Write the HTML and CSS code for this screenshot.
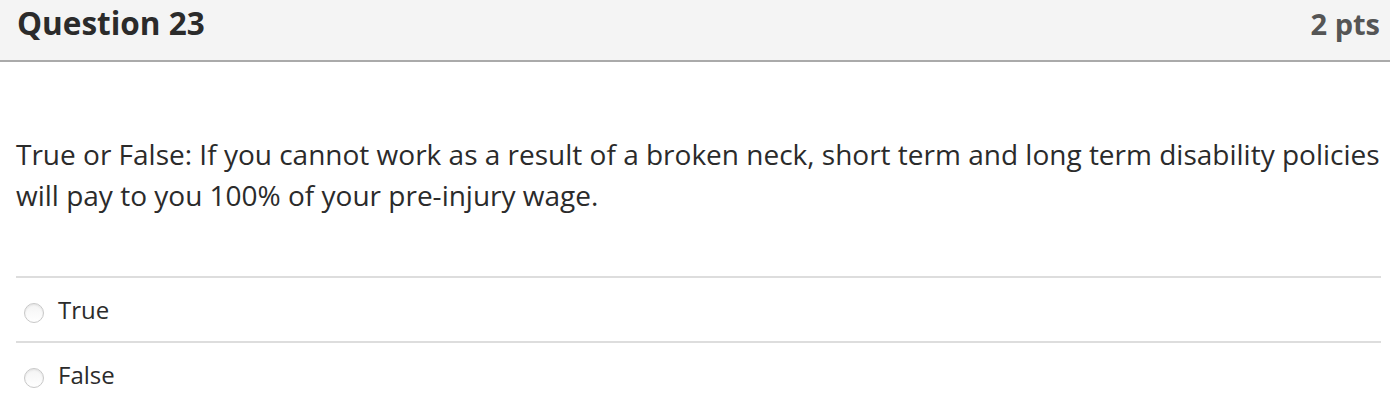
FILE: index.html
```html
<!DOCTYPE html>
<html>
<head>
<meta charset="utf-8">
<link rel="stylesheet" href="styles.css">
</head>
<body>
<div class="question">
  <div class="header">
    <span class="title">Question 23</span>
    <span class="pts">2 pts</span>
  </div>
  <div class="content">
    <p class="text">True or False: If you cannot work as a result of a broken neck, short term and long term disability policies will pay to you 100% of your pre-injury wage.</p>
    <div class="answers">
      <div class="answer"><span class="radio"></span><span class="label">True</span></div>
      <div class="answer"><span class="radio"></span><span class="label">False</span></div>
    </div>
  </div>
</div>
</body>
</html>
```
FILE: styles.css
```css
html, body {
  margin: 0;
  padding: 0;
  background: #fff;
}
body {
  font-family: "Open Sans", "Noto Sans", sans-serif;
  color: #2d3b45;
  width: 1390px;
  height: 402px;
  overflow: hidden;
}
.header {
  background: #f4f4f4;
  height: 59px;
  border-bottom: 2px solid #aaaaaa;
  display: flex;
  align-items: baseline;
  justify-content: space-between;
  padding: 1px 10px 0 17px;
  box-sizing: content-box;
}
.title {
  font-weight: 700;
  font-size: 31.5px;
  color: #2b2b2b;
}
.pts {
  font-weight: 700;
  font-size: 29px;
  color: #555;
}
.content {
  padding: 0 9px 0 16px;
}
.text {
  margin: 72px 0 0 0;
  font-size: 28px;
  line-height: 41px;
  color: #2b2b2b;
}
.answers {
  margin-top: 60px;
}
.answer {
  border-top: 2px solid #dddddd;
  height: 65px;
  display: flex;
  align-items: center;
  padding-left: 8px;
  padding-bottom: 1px;
  box-sizing: border-box;
}
.radio {
  width: 20px;
  height: 20px;
  box-sizing: border-box;
  border-radius: 50%;
  border: 1px solid #c8c8c8;
  background: linear-gradient(#f4f4f4, #ffffff);
  box-shadow: inset 0 1px 2px rgba(0,0,0,0.08);
  margin-right: 14px;
  margin-top: 8px;
}
.label {
  font-size: 24px;
  color: #2b2b2b;
}
```
